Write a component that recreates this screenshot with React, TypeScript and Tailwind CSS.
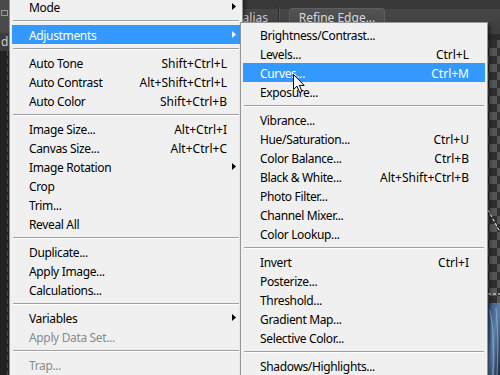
import { Fragment } from 'react';

type Item =
  | { sep: true }
  | {
      sep?: false;
      label: string;
      shortcut?: string;
      sub?: boolean;
      active?: boolean;
      disabled?: boolean;
    };

const imageMenu: Item[] = [
  { label: 'Mode', sub: true },
  { sep: true },
  { label: 'Adjustments', sub: true, active: true },
  { sep: true },
  { label: 'Auto Tone', shortcut: 'Shift+Ctrl+L' },
  { label: 'Auto Contrast', shortcut: 'Alt+Shift+Ctrl+L' },
  { label: 'Auto Color', shortcut: 'Shift+Ctrl+B' },
  { sep: true },
  { label: 'Image Size...', shortcut: 'Alt+Ctrl+I' },
  { label: 'Canvas Size...', shortcut: 'Alt+Ctrl+C' },
  { label: 'Image Rotation', sub: true },
  { label: 'Crop' },
  { label: 'Trim...' },
  { label: 'Reveal All' },
  { sep: true },
  { label: 'Duplicate...' },
  { label: 'Apply Image...' },
  { label: 'Calculations...' },
  { sep: true },
  { label: 'Variables', sub: true },
  { label: 'Apply Data Set...', disabled: true },
  { sep: true },
  { label: 'Trap...', disabled: true },
];

const adjustMenu: Item[] = [
  { label: 'Brightness/Contrast...' },
  { label: 'Levels...', shortcut: 'Ctrl+L' },
  { label: 'Curves...', shortcut: 'Ctrl+M', active: true },
  { label: 'Exposure...' },
  { sep: true },
  { label: 'Vibrance...' },
  { label: 'Hue/Saturation...', shortcut: 'Ctrl+U' },
  { label: 'Color Balance...', shortcut: 'Ctrl+B' },
  { label: 'Black & White...', shortcut: 'Alt+Shift+Ctrl+B' },
  { label: 'Photo Filter...' },
  { label: 'Channel Mixer...' },
  { label: 'Color Lookup...' },
  { sep: true },
  { label: 'Invert', shortcut: 'Ctrl+I' },
  { label: 'Posterize...' },
  { label: 'Threshold...' },
  { label: 'Gradient Map...' },
  { label: 'Selective Color...' },
  { sep: true },
  { label: 'Shadows/Highlights...' },
];

function Arrow({ white }: { white?: boolean }) {
  return (
    <svg width="4" height="7" viewBox="0 0 4 7">
      <path d="M0 0 L4 3.5 L0 7 Z" fill={white ? '#ffffff' : '#000000'} />
    </svg>
  );
}

function MenuList({ items, tail }: { items: Item[]; tail: number }) {
  return (
    <>
      {items.map((item, i) => {
        if (item.sep) {
          return (
            <div key={i} className="h-[9px] flex flex-col justify-center pl-[1px] pr-[1px]">
              <div className="h-px bg-[#a0a0a0]" />
              <div className="h-px bg-white" />
            </div>
          );
        }
        const color = item.active ? 'text-white' : item.disabled ? 'text-[#8b8b8b]' : 'text-black';
        return (
          <div
            key={i}
            className={`h-[19px] flex items-center pl-[17px] pt-[2px] ${item.active ? 'bg-[#3399ff]' : ''} ${color}`}
          >
            <span className="flex-1 whitespace-nowrap tracking-[-0.35px]">{item.label}</span>
            {item.shortcut && <span className="whitespace-nowrap">{item.shortcut}</span>}
            <span className="flex items-center pl-[5px] -mt-[2px]" style={{ width: tail }}>
              {item.sub && <Arrow white={item.active} />}
            </span>
          </div>
        );
      })}
    </>
  );
}

function Cursor() {
  return (
    <svg width="13" height="20" viewBox="0 0 13 20">
      <path
        d="M0.5 0.5 L0.5 15.5 L4 12.2 L6.6 18.5 L9 17.5 L6.4 11.4 L11.2 11.4 Z"
        fill="#ffffff"
        stroke="#000000"
        strokeWidth="1"
        strokeLinejoin="miter"
      />
    </svg>
  );
}

export default function App() {
  return (
    <div
      className="relative w-[500px] h-[375px] overflow-hidden bg-[#262626] text-[12px] leading-none"
      style={{ fontFamily: '"Noto Sans", "Segoe UI", sans-serif' }}
    >
      {/* workspace behind the menus */}
      <div className="flex h-full">
        <div className="w-[9px] flex flex-col">
          <div className="h-[33px] bg-[#4a4a4a] flex items-start pt-[10px]">
            <div className="w-[7px] h-[6px] border border-[#9a9a9a] ml-[1px]" />
          </div>
          <div className="h-[18px] bg-[#3c3c3c] flex items-center text-[#cfcfcf] overflow-hidden whitespace-nowrap pl-[1px]">
            d (
          </div>
          <div className="flex-1 flex justify-end pr-[1px] bg-[#222222]">
            <div className="w-px bg-[repeating-linear-gradient(to_bottom,#4a4a4a_0_5px,transparent_5px_8px)]" />
          </div>
        </div>
        <div className="flex-1 flex flex-col">
          <div className="h-[34px] flex items-center bg-[linear-gradient(#383838_0_9px,#474747_9px,#3d3d3d)]">
            <div className="w-[259px] flex justify-end text-[#c8c8c8] whitespace-nowrap pt-[1px]">Anti-alias</div>
            <div className="ml-[10px] w-[2px] h-[20px] border-l border-[#2b2b2b] border-r border-r-[#555555]" />
            <div className="ml-[9px] w-[96px] h-[19px] rounded-[3px] border border-[#5e5e5e] bg-[linear-gradient(#545454,#464646)] flex items-center justify-center text-[#d8d8d8] pt-[1px]">
              Refine Edge...
            </div>
          </div>
          <div className="h-[6px] bg-[#2c2c2c]" />
          <div className="flex-1 relative bg-[repeating-conic-gradient(#555555_0_25%,#2f2f2f_0_50%)] bg-[length:16px_16px]">
            <svg className="absolute inset-0" width="491" height="335" viewBox="0 0 491 335">
              <defs>
                <linearGradient id="img" x1="0" y1="0" x2="1" y2="1">
                  <stop offset="0" stopColor="#2d4a6e" />
                  <stop offset="0.5" stopColor="#5c7fa8" />
                  <stop offset="1" stopColor="#17263d" />
                </linearGradient>
              </defs>
              <rect x="478" y="263" width="13" height="72" fill="url(#img)" />
              <path d="M481 270 Q486 300 484 335" stroke="#8fb0d6" strokeWidth="1.5" fill="none" opacity="0.7" />
              <path d="M487 268 Q490 300 488 335" stroke="#a8c2e0" strokeWidth="1" fill="none" opacity="0.6" />
              <path d="M479 170 L491 192" stroke="#ffffff" strokeWidth="1" strokeDasharray="3 2" />
              <path d="M479 254 L491 254" stroke="#ffffff" strokeWidth="1" strokeDasharray="3 2" />
            </svg>
          </div>
        </div>
      </div>

      {/* Image menu */}
      <div className="absolute left-[9px] top-[-6px] w-[234px] border border-[#979797] bg-[#f0f0f0] p-[2px] shadow-[2px_2px_3px_rgba(0,0,0,0.4)]">
        <MenuList items={imageMenu} tail={13} />
      </div>

      {/* Adjustments submenu */}
      <div className="absolute left-[240px] top-[22px] w-[248px] border border-[#979797] bg-[#f0f0f0] p-[2px] shadow-[2px_2px_3px_rgba(0,0,0,0.5)]">
        <MenuList items={adjustMenu} tail={16} />
      </div>

      {/* mouse pointer */}
      <div className="absolute left-[293px] top-[74px]">
        <Cursor />
      </div>
    </div>
  );
}
